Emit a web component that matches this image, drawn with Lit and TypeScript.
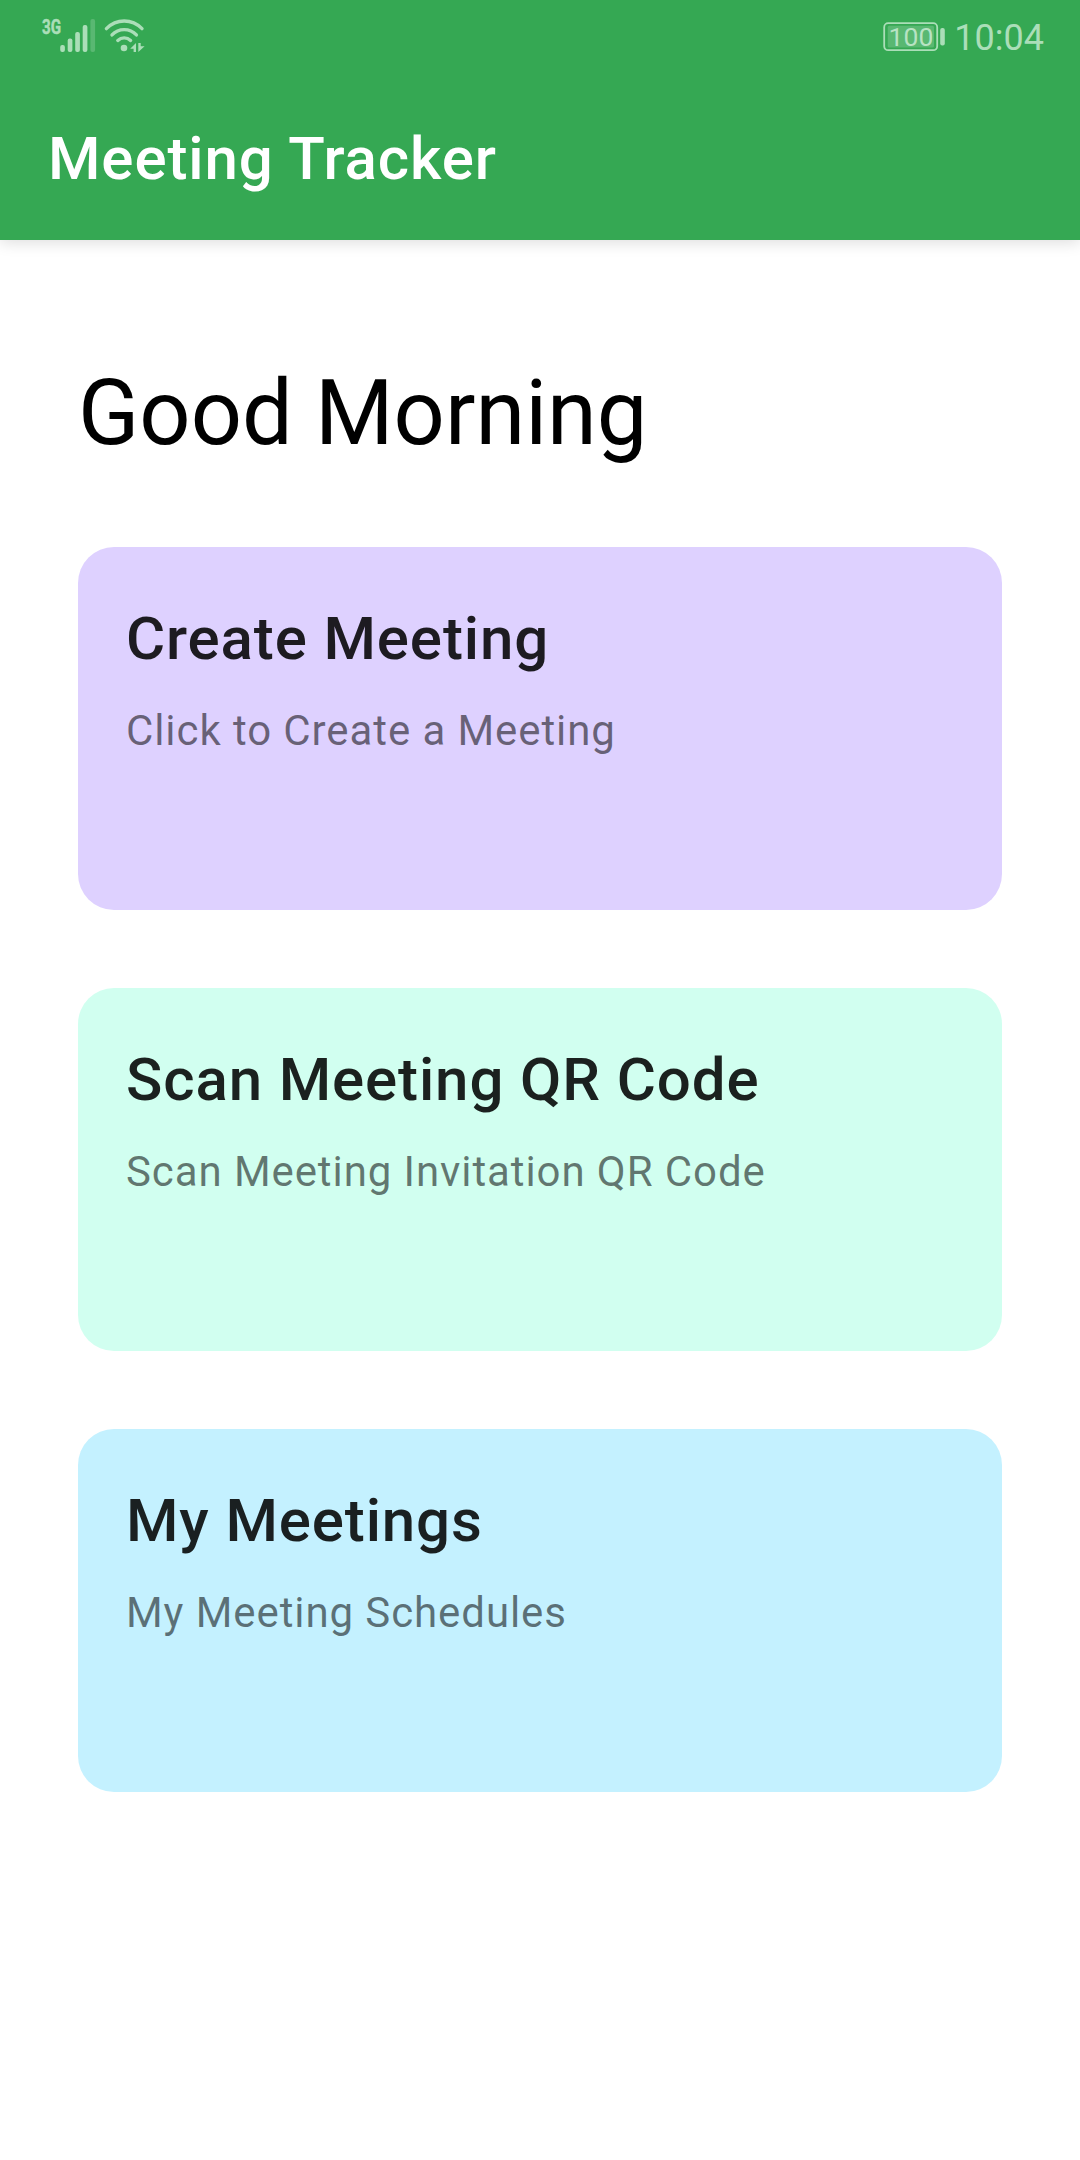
import { LitElement, html, css } from "lit";
import { customElement, property } from "lit/decorators.js";

@customElement("status-bar")
class StatusBar extends LitElement {
  static styles = css`
    :host {
      display: flex;
      justify-content: space-between;
      height: 72px;
      color: #abdeb8;
      font-family: Roboto, sans-serif;
    }
    svg {
      display: block;
    }
    .right {
      display: flex;
      padding-right: 36px;
      gap: 7px;
    }
    .clock {
      font-size: 36px;
      line-height: 42px;
      padding-top: 17px;
    }
    .dim {
      opacity: 0.3;
    }
    .network {
      font-size: 20px;
      font-weight: 700;
      stroke: currentColor;
      stroke-width: 0.5px;
    }
    .level {
      font-size: 26.5px;
      fill: #b8e3c3;
    }
  `;

  render() {
    return html`
      <svg width="160" height="72" viewBox="0 0 160 72" fill="currentColor">
        <text class="network" x="42" y="33.7" textLength="19" lengthAdjust="spacingAndGlyphs">3G</text>
        <rect x="60.2" y="45" width="4.7" height="7" rx="2" />
        <rect x="67.7" y="38.5" width="4.7" height="13.5" rx="2" />
        <rect x="75.2" y="32" width="4.7" height="20" rx="2" />
        <rect x="82.7" y="25" width="4.7" height="27" rx="2" />
        <rect class="dim" x="90.4" y="19" width="4.7" height="33" rx="2" />
        <g fill="none" stroke="currentColor" stroke-width="3.4" stroke-linecap="round">
          <path d="M106.4 28.6Q114 21 124.2 21T142 28.6" />
          <path d="M112 34.9Q117 29.6 124.2 29.6T136.4 34.9" />
          <path d="M117.8 40.4Q120.5 37.9 124.2 37.9T130.6 40.4" />
        </g>
        <circle cx="124" cy="48" r="3.3" />
        <path d="M136 43V52H133.6V48.8H130.2ZM138.3 43H140.7V46.2H144.6L138.3 52Z" />
      </svg>
      <div class="right">
        <svg width="65" height="72" viewBox="882 0 65 72" fill="currentColor">
          <rect x="884.2" y="23.2" width="53" height="27" rx="4" fill="none" stroke="currentColor" stroke-width="1.8" />
          <rect x="887.7" y="25.8" width="46.3" height="21.6" rx="1.5" opacity="0.3" />
          <rect x="940.2" y="28" width="4.6" height="17.4" rx="2" />
          <text class="level" x="888.6" y="46">100</text>
        </svg>
        <div class="clock">10:04</div>
      </div>
    `;
  }
}

@customElement("action-card")
class ActionCard extends LitElement {
  @property() heading = "";
  @property() detail = "";

  static styles = css`
    :host {
      display: flex;
      flex-direction: column;
      box-sizing: border-box;
      height: 363px;
      padding: 56px 48px 0;
      border-radius: 36px;
      font-family: Roboto, sans-serif;
    }
    .heading {
      margin: 0;
      font-size: 60px;
      line-height: 72px;
      font-weight: 500;
      letter-spacing: 0.88px;
      color: rgba(0, 0, 0, 0.87);
    }
    .detail {
      margin: 31px 0 0;
      font-size: 42px;
      line-height: 50px;
      letter-spacing: 0.91px;
      color: rgba(0, 0, 0, 0.54);
    }
  `;

  render() {
    return html`
      <h2 class="heading">${this.heading}</h2>
      <p class="detail">${this.detail}</p>
    `;
  }
}

@customElement("app-root")
class AppRoot extends LitElement {
  static styles = css`
    :host {
      display: block;
      min-height: 2160px;
      background: #fff;
      font-family: Roboto, sans-serif;
    }
    .header {
      height: 240px;
      background: #35a853;
      box-shadow: 0 3px 14px rgba(0, 0, 0, 0.13);
    }
    .title {
      margin: 0;
      padding: 51px 48px 0;
      font-size: 60px;
      line-height: 72px;
      font-weight: 500;
      letter-spacing: 0.9px;
      color: #fff;
    }
    .content {
      padding: 120px 78px 0;
    }
    .greeting {
      margin: 0 0 79px;
      font-size: 90px;
      line-height: 108px;
      font-weight: 400;
      color: #000;
    }
    .cards {
      display: flex;
      flex-direction: column;
      gap: 78px;
    }
    .create {
      background: #ded1ff;
    }
    .scan {
      background: #d1fff0;
    }
    .mine {
      background: #c4f1ff;
    }
  `;

  render() {
    return html`
      <header class="header">
        <status-bar></status-bar>
        <h1 class="title">Meeting Tracker</h1>
      </header>
      <main class="content">
        <p class="greeting">Good Morning</p>
        <div class="cards">
          <action-card class="create" heading="Create Meeting" detail="Click to Create a Meeting"></action-card>
          <action-card class="scan" heading="Scan Meeting QR Code" detail="Scan Meeting Invitation QR Code"></action-card>
          <action-card class="mine" heading="My Meetings" detail="My Meeting Schedules"></action-card>
        </div>
      </main>
    `;
  }
}
